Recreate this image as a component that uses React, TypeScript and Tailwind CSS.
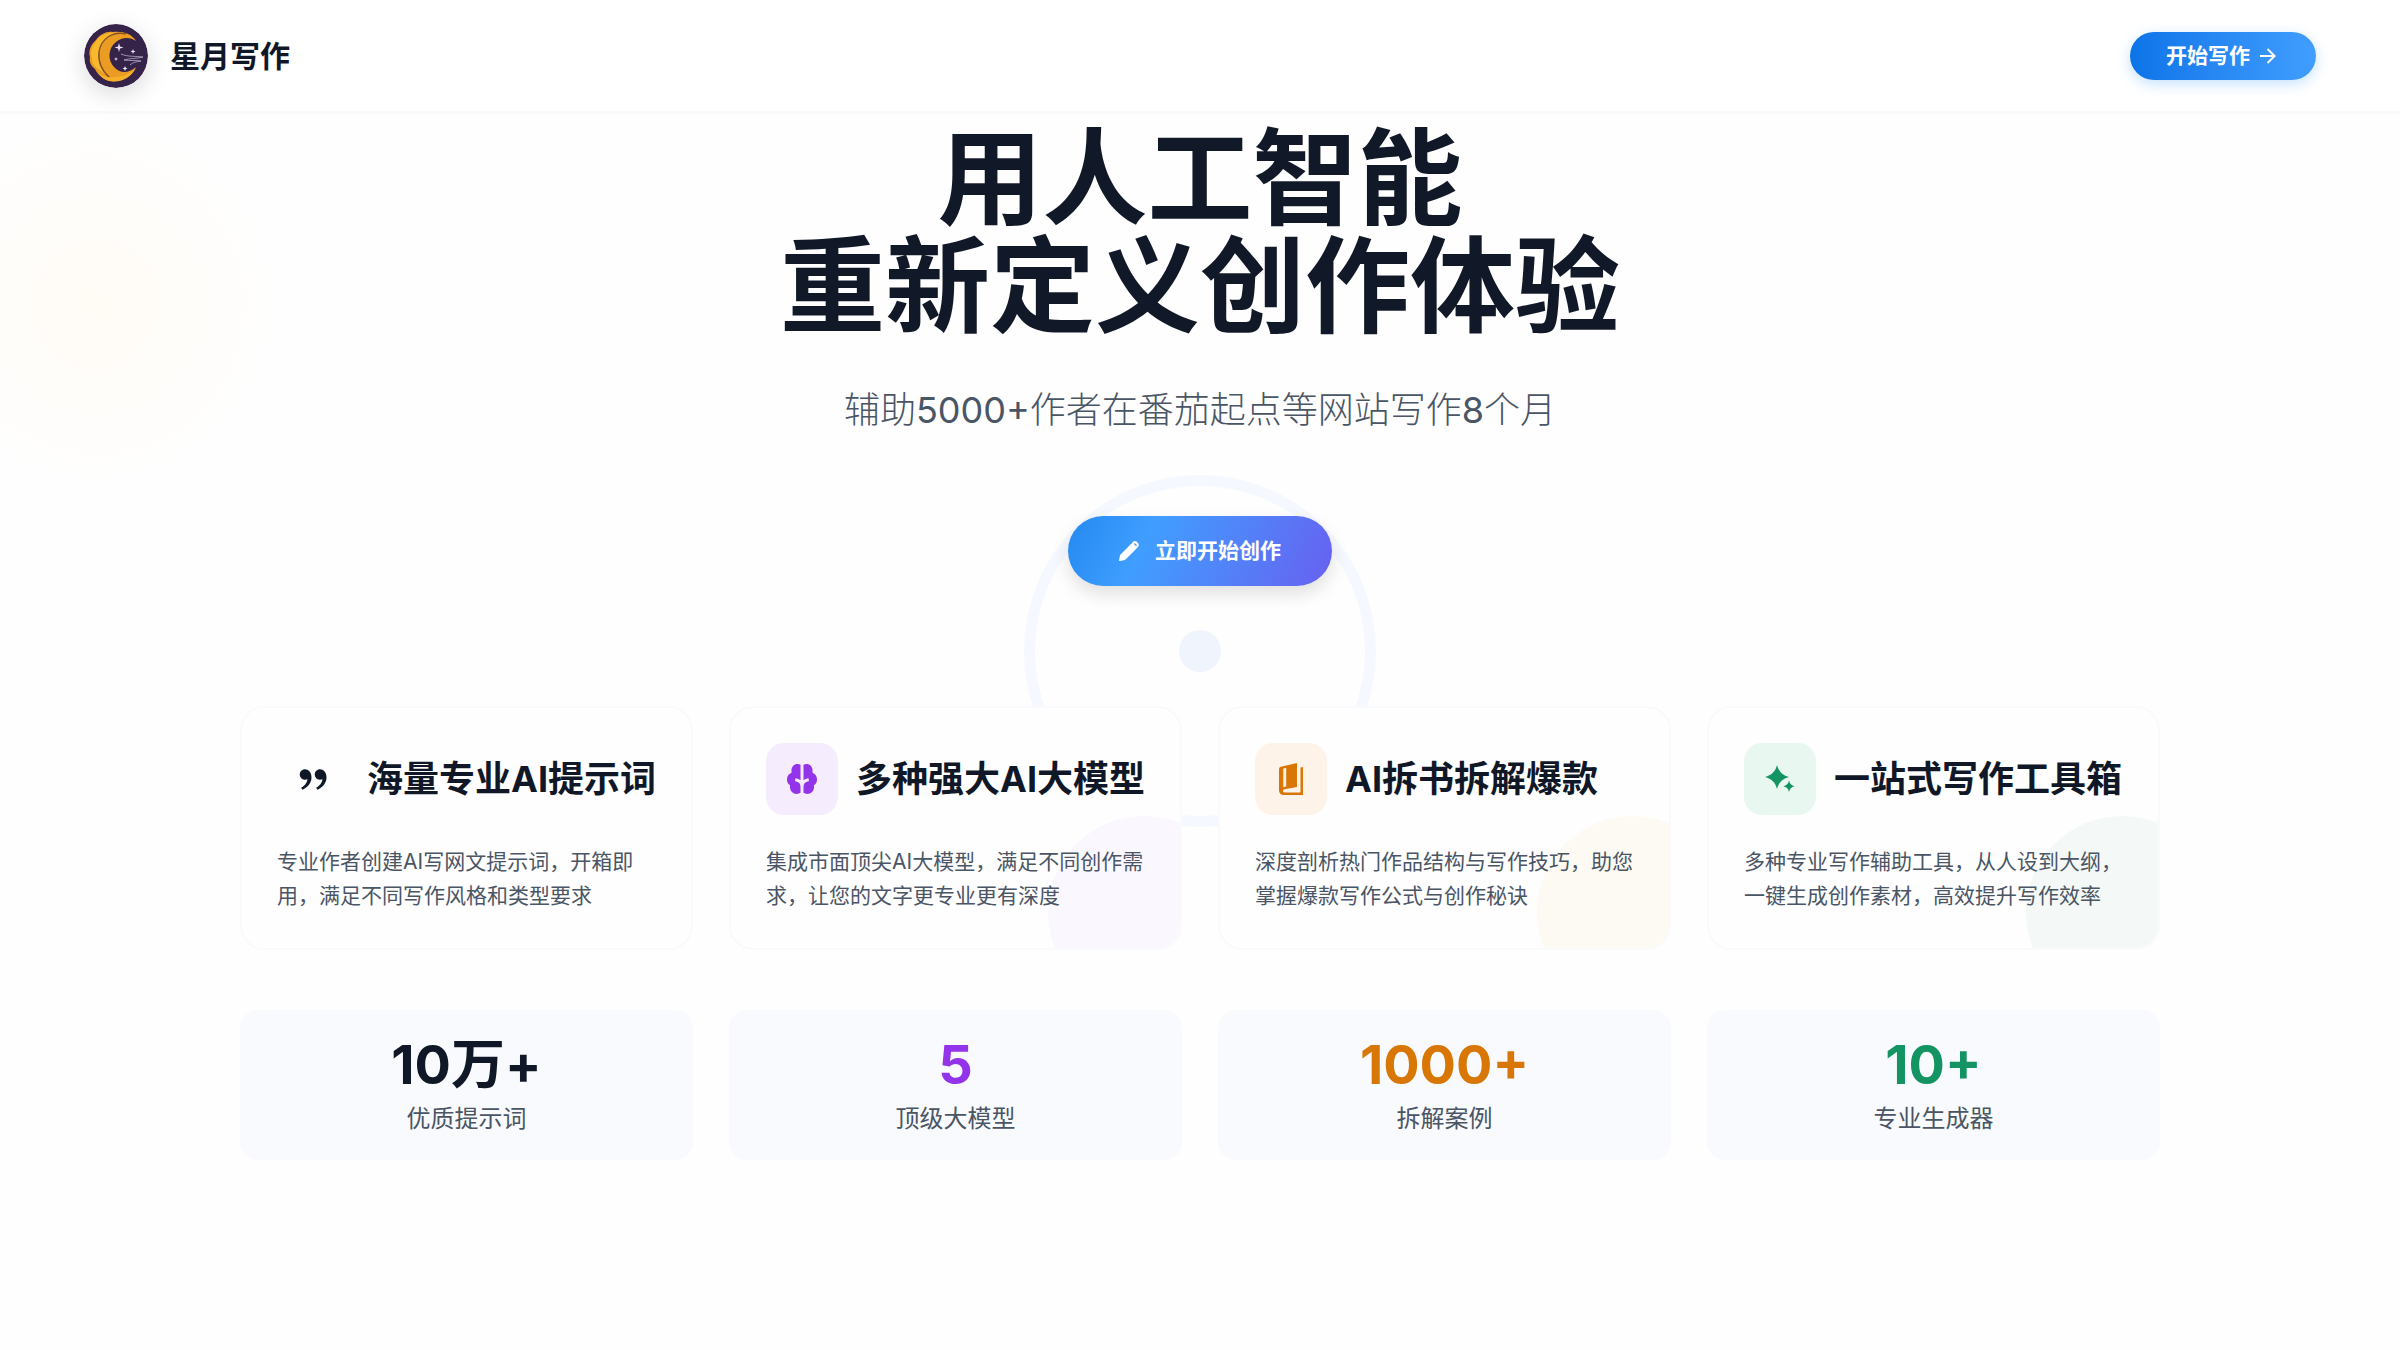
import { RiArrowRightLine, RiBrainFill, RiDoubleQuotesR } from 'react-icons/ri';

const features = [
  {
    title: '海量专业AI提示词',
    text: '专业作者创建AI写网文提示词，开箱即用，满足不同写作风格和类型要求',
    icon: <RiDoubleQuotesR className="size-9" />,
    badge: 'text-gray-900',
    blob: '',
  },
  {
    title: '多种强大AI大模型',
    text: '集成市面顶尖AI大模型，满足不同创作需求，让您的文字更专业更有深度',
    icon: <RiBrainFill className="size-9" />,
    badge: 'bg-[#f5edfe] text-[#9333ea]',
    blob: 'bg-[#fbf7fe]',
  },
  {
    title: 'AI拆书拆解爆款',
    text: '深度剖析热门作品结构与写作技巧，助您掌握爆款写作公式与创作秘诀',
    icon: <BookIcon />,
    badge: 'bg-[#fef3e8] text-[#d97706]',
    blob: 'bg-[#fdfaf3]',
  },
  {
    title: '一站式写作工具箱',
    text: '多种专业写作辅助工具，从人设到大纲，一键生成创作素材，高效提升写作效率',
    icon: <SparkleIcon />,
    badge: 'bg-[#e9f7f1] text-[#149463]',
    blob: 'bg-[#f4f9f7]',
  },
];

const stats = [
  { value: '10万+', label: '优质提示词', color: 'text-gray-900' },
  { value: '5', label: '顶级大模型', color: 'text-[#9333ea]' },
  { value: '1000+', label: '拆解案例', color: 'text-[#d97706]' },
  { value: '10+', label: '专业生成器', color: 'text-[#149463]' },
];

function BookIcon() {
  return (
    <svg viewBox="0 0 24 32" className="h-8 w-6" fill="none" aria-hidden="true">
      <path d="M3 3.500 18 0v24L5.500 26.300C3.500 26.800 3.500 29.500 5.500 29.500h16V4.200H24V32H4.500A4.500 4.500 0 0 1 0 27.500V6.500a3 3 0 0 1 3-3Z" fill="currentColor" />
      <path d="M4.300 5.500 7.200 4.900v18.700l-2.900.6Z" fill="#fef3e8" />
    </svg>
  );
}

function SparkleIcon() {
  return (
    <svg viewBox="0 0 30 28" className="h-7 w-[30px]" fill="currentColor" aria-hidden="true">
      <path d="M12 0c1.600 6.500 5.500 10.400 12 12-6.500 1.600-10.400 5.500-12 12C10.400 17.500 6.500 13.600 0 12 6.500 10.400 10.400 6.500 12 0Z" />
      <path d="M24 15.500c.7 3.300 2.400 5 5.700 5.700-3.300.7-5 2.400-5.700 5.700-.7-3.300-2.400-5-5.700-5.700 3.300-.7 5-2.400 5.700-5.700Z" />
    </svg>
  );
}

function PencilIcon() {
  return (
    <svg viewBox="0 0 20 20" className="size-5" aria-hidden="true">
      <path d="M13.500 1.400a3.500 3.500 0 0 1 5 0 3.500 3.500 0 0 1 0 5L7 18a4 4 0 0 1-2.200 1.200l-4 .7a.6.600 0 0 1-.7-.7l.7-4A4 4 0 0 1 2 13Z" fill="#fff" />
      <path d="m15.800 3 1.300 1.300" fill="none" stroke="#5b95fb" strokeWidth="1.500" strokeLinecap="round" />
    </svg>
  );
}

function Logo() {
  return (
    <svg viewBox="0 0 64 64" className="size-16 rounded-full shadow-[0_6px_24px_rgba(0,0,0,0.15)]" aria-hidden="true">
      <circle cx="32" cy="32" r="32" fill="#35234a" />
      <path d="M52 17C48 10 39 7 29 8 23 7 16 10 12 16 7 20 4 27 6 33c-1 5 1 9 5 12 3 6 8 10 14 12 11 2 22-4 27-14-7 6-15 7-21 1-8-7-7-20 1-26 6-5 14-5 20-1Z" fill="#ea9d22" />
      <path d="M33 9C22 8 14 13 11 19c-4 5-5 10-3 15 0 6 3 9 6 11l11 8c-8-7-12-16-10-25 2-10 9-16 18-19Z" fill="#f8b92c" />
      <path d="M42 10C28 7 17 15 15 28c-1 10 3 19 11 26" fill="none" stroke="#8a5426" strokeWidth="1.500" />
      <path d="M26 57c-5-1-9-4-12-8 6 4 11 5 17 4 9 0 15-4 21-9-5 9-14 15-26 13Z" fill="#f6b02a" />
      <path d="m35 19 1 3.500 3.500 1-3.500 1-1 3.500-1-3.500-3.500-1 3.500-1ZM49 25l.7 1.800 1.800.7-1.800.7L49 30l-.7-1.800-1.800-.7 1.800-.7ZM32 33l.6 1.400 1.400.6-1.400.6L32 37l-.6-1.400L30 35l1.400-.6ZM41 42l.8 1.700 1.700.8-1.700.8L41 47l-.8-1.700-1.700-.8 1.700-.8Z" fill="#e9e2f2" />
      <path d="M37 30c7 3 14 2 22 3-7 2-13 1-19 3 6 1 12 0 17 1-5 1-8 1-11 4" fill="none" stroke="#b9adc6" strokeWidth=".8" />
    </svg>
  );
}

export default function App() {
  return (
    <div className="relative min-h-screen overflow-hidden bg-[#fefefe] font-['Inter','Noto_Sans_CJK_SC',sans-serif] text-gray-900">
      <div className="pointer-events-none absolute -left-24 top-28 size-96 rounded-full bg-[radial-gradient(circle,#fffcf6_0%,#fffdfa_35%,transparent_70%)]" />

      <header className="relative flex h-28 items-center justify-between border-b border-[#f9f9fa] bg-white px-[84px] shadow-[0_1px_3px_rgba(0,0,0,0.03)]">
        <div className="flex items-center gap-[22px]">
          <Logo />
          <span className="text-[30px] font-bold leading-9">星月写作</span>
        </div>
        <button
          type="button"
          className="flex h-12 items-center gap-1.5 rounded-full bg-linear-to-r from-[#0b74e8] to-[#409eff] px-9 text-[21px] font-bold text-white shadow-[0_4px_14px_rgba(64,158,255,0.3)]"
        >
          开始写作
          <RiArrowRightLine className="size-6" />
        </button>
      </header>

      <main className="relative mx-auto w-4/5 pt-3">
        {/* Hero */}
        <section className="relative flex flex-col items-center">
          <div className="absolute left-1/2 top-[351px] flex size-[352px] -translate-x-1/2 items-center justify-center rounded-full border-[11px] border-[#f5f8fe]">
            <div className="size-[42px] rounded-full bg-[#eff4fd]" />
          </div>
          <h1 className="text-center text-[105px] font-bold leading-[108px] text-[#111827]">
            <span className="block">用人工智能</span>
            <span className="block">重新定义创作体验</span>
          </h1>
          <p className="mt-10 text-4xl font-light leading-[60px] text-gray-600">
            辅助<span className="font-normal">5000+</span>作者在番茄起点等网站写作<span className="font-normal">8</span>个月
          </p>
          <button
            type="button"
            className="relative mt-[76px] flex h-[70px] items-center gap-4 rounded-full bg-linear-[115deg] from-[#2389f0] via-[#409eff] via-30% to-[#6860f0] px-[51px] text-[21px] font-bold text-white shadow-[0_8px_18px_rgba(0,0,0,0.12)]"
          >
            <PencilIcon />
            立即开始创作
          </button>
        </section>

        {/* Features */}
        <section className="relative mt-[120px] grid grid-cols-4 gap-9">
          {features.map((item) => (
            <div key={item.title} className="relative overflow-hidden rounded-3xl border-2 border-[#f9fafb] bg-[#fefefe] p-[35px]">
              <div className={`absolute -bottom-[60px] -right-[60px] size-48 rounded-full ${item.blob}`} />
              <div className="relative flex items-center gap-[18px]">
                <div className={`flex size-[72px] shrink-0 items-center justify-center rounded-[18px] ${item.badge}`}>
                  {item.icon}
                </div>
                <h3 className="whitespace-nowrap text-4xl font-bold leading-[48px]">{item.title}</h3>
              </div>
              <p className="relative mt-[30px] text-[21px] leading-[34px] text-gray-600">{item.text}</p>
            </div>
          ))}
        </section>

        {/* Stats */}
        <section className="relative mt-[60px] grid grid-cols-4 gap-9">
          {stats.map((item) => (
            <div key={item.label} className="rounded-[18px] bg-[#f9fafd] px-6 pb-[23px] pt-[25px] text-center">
              <div className={`text-[54px] font-bold leading-[60px] ${item.color}`}>{item.value}</div>
              <div className="mt-1.5 text-2xl leading-9 text-gray-600">{item.label}</div>
            </div>
          ))}
        </section>
      </main>
    </div>
  );
}
